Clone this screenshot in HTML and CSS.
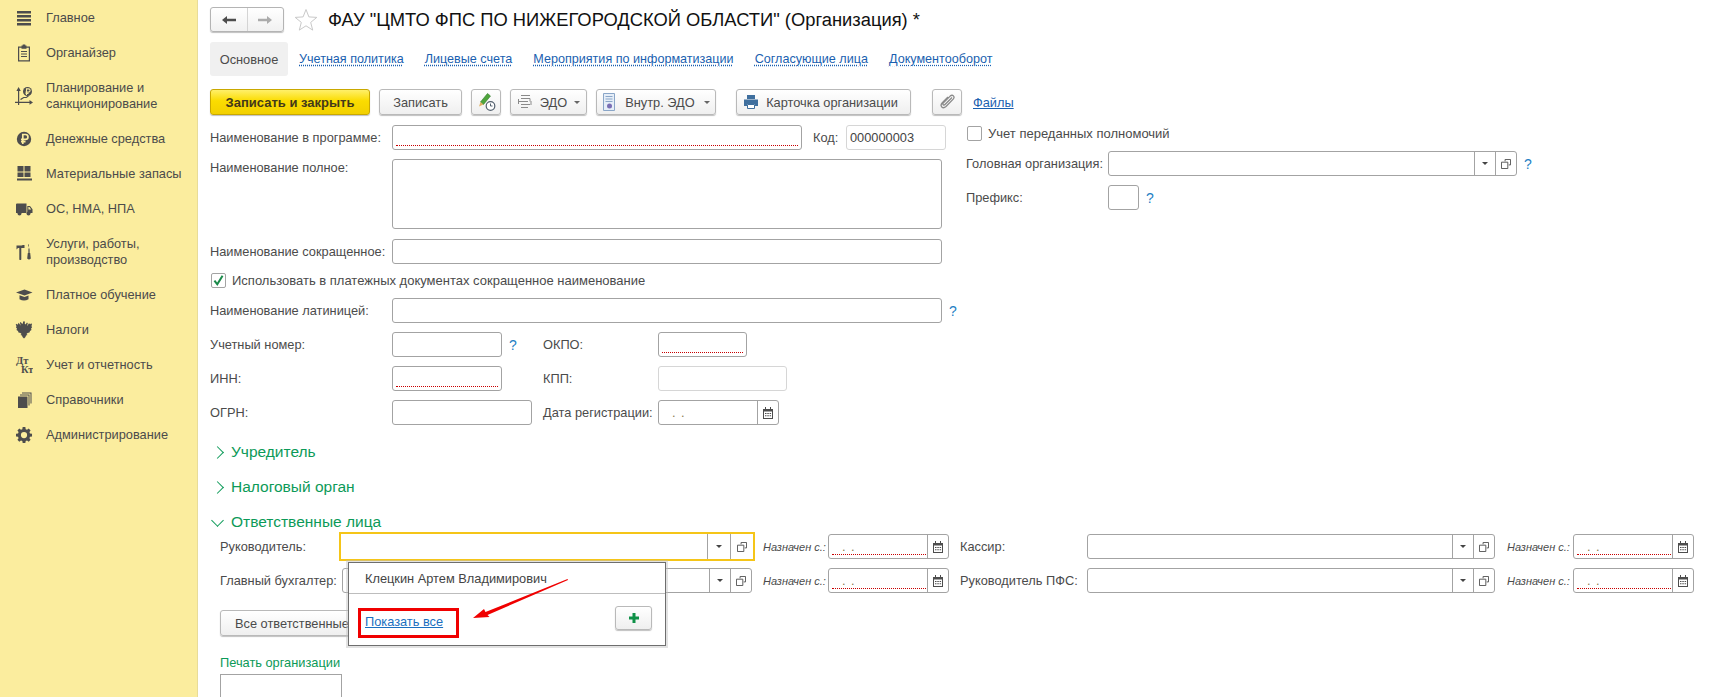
FILE: index.html
```html
<!DOCTYPE html>
<html lang="ru">
  <head>
    <meta charset="UTF-8" />
    <title>ФАУ "ЦМТО ФПС ПО НИЖЕГОРОДСКОЙ ОБЛАСТИ" (Организация)</title>
    <link rel="stylesheet" href="styles.css">
  </head>
  <body>
    <div class="app">
      <nav class="sidebar">
        <a class="nav-item">
          <svg class="nav-icon" viewBox="0 0 18 18"><path d="M2 2h14v2.4H2zM2 6h14v2.4H2zM2 10h14v2.4H2zM2 14h14v2.4H2z"/></svg>
          <span>Главное</span>
        </a>
        <a class="nav-item">
          <svg class="nav-icon" viewBox="0 0 18 18"><path d="M6.5 1.5h1.2V.6h2.6v.9h1.2v1H15v15H3v-15h3.5zM4.2 3.7v12.6h9.6V3.7h-2.3v1h-5v-1zM6 7h6v1.1H6zM6 9.5h6v1.1H6zM6 12h6v1.1H6z"/></svg>
          <span>Органайзер</span>
        </a>
        <a class="nav-item nav-item-double">
          <svg class="nav-icon" viewBox="0 0 18 18"><path d="M3 18v-2H0v-1.200h3V4H1.400L3.600 0l2.200 4H4.200v10.800h10.300V13l3.500 2.400-3.500 2.400v-1.800H4.200v2zM5.500 13v-1.300l3-1.800h2.500l2-1.500.8 1-2.400 1.700H9l-3 1.900z"/><circle cx="12.500" cy="4.500" r="4.500"/><path class="cut" d="M11.500 8V1.900h2a1.500 1.500 0 0 1 0 3.200h-3M10.500 6.500h3" fill="none"/></svg>
          <span>Планирование и санкционирование</span>
        </a>
        <a class="nav-item">
          <svg class="nav-icon" viewBox="0 0 18 18"><circle cx="9" cy="9" r="7.200"/><path class="cut thick" d="M7.800 14V4.500h2.700a2.400 2.400 0 0 1 0 4.900H6M6 11.700h4.500" fill="none"/></svg>
          <span>Денежные средства</span>
        </a>
        <a class="nav-item">
          <svg class="nav-icon" viewBox="0 0 18 18"><path d="M2.500 1h6v5.500h-6zM9.500 1h6v5.500h-6zM2.500 7.500h6V12h-6zM9.500 7.500h6V12h-6zM2 13.500h15v2H2z"/></svg>
          <span>Материальные запасы</span>
        </a>
        <a class="nav-item">
          <svg class="nav-icon" viewBox="0 0 18 18"><path d="M1 4.500q0-1 1-1h9.500v9.500H1zM12.300 6h2.700l2.500 3.300V13h-5.200zM13.400 7.100v2.400h2.800l-1.800-2.400z"/><circle cx="4.500" cy="13.500" r="2"/><circle cx="13.500" cy="13.500" r="2"/></svg>
          <span>ОС, НМА, НПА</span>
        </a>
        <a class="nav-item nav-item-double">
          <svg class="nav-icon" viewBox="0 0 18 18"><path d="M1.500 2.500h5l1.500-.5h1.500v3h-3.200v11.500q-1 1-2 0V5H3L1.500 6.500zM13 1.500h1v3l.6 2V10h.6l.6 5.500q-1.800 2-3.600 0l.6-5.500h.6V6.500l.6-2z"/></svg>
          <span>Услуги, работы, производство</span>
        </a>
        <a class="nav-item">
          <svg class="nav-icon" viewBox="0 0 18 18"><path d="M1 6.500 9.500 3.500l8 3-8 3zM4.500 9.300l5 1.800 4-1.500v3.600q-4.500 2.700-9 0z"/></svg>
          <span>Платное обучение</span>
        </a>
        <a class="nav-item">
          <svg class="nav-icon" viewBox="0 0 18 18"><path d="M8 .5h2l-.3 2 .8 1 1.500-2 .8.800-.8 3 2-3 1.200 1 1-1 .8 1L16.500 5l.5 1.500-1 1 .5 1.500-1.500 1-.5 1.500-2 .5-1 1 1 1-1.500.5-.5 1.500L9 17.500 7.500 16 7 14.500l-1.500-.5 1-1-1-1-2-.5L3 10 1.500 9 2 7.500l-1-1 .5-1.500-.8-1.200.8-1 1 1L3.700 1.800l2 3-.8-3 .8-.8 1.500 2 .8-1z"/></svg>
          <span>Налоги</span>
        </a>
        <a class="nav-item">
          <svg class="nav-icon" viewBox="0 0 18 18"><text class="dk" x="1" y="8">Дт</text><text class="dk" x="6" y="17">Кт</text></svg>
          <span>Учет и отчетность</span>
        </a>
        <a class="nav-item">
          <svg class="nav-icon" viewBox="0 0 18 18"><path d="M3 5.500h9.500V17H3zM5 3.500h9.500v11h-1V4.500H5zM7 1.500h9.500v11h-1v-10H7z"/></svg>
          <span>Справочники</span>
        </a>
        <a class="nav-item">
          <svg class="nav-icon" viewBox="0 0 18 18"><path fill-rule="evenodd" d="M7.500 1h3l.4 2.300 1.500.6 1.900-1.300 2.100 2.100-1.300 1.900.6 1.500 2.300.4v3l-2.300.4-.6 1.500 1.300 1.900-2.100 2.100-1.900-1.300-1.500.6-.4 2.300h-3l-.4-2.300-1.500-.6-1.900 1.300L1.600 15.300l1.300-1.900-.6-1.500L0 11.500v-3l2.300-.4.6-1.500L1.600 4.700l2.100-2.100 1.900 1.300 1.500-.6zM9 6.500a3.500 3.500 0 1 0 0 7 3.500 3.500 0 0 0 0-7z" transform="translate(1 .2) scale(.89)"/></svg>
          <span>Администрирование</span>
        </a>
      </nav>

      <main class="main">
        <header class="title-bar">
          <div class="history">
            <span class="history-btn">
              <svg width="14" height="10" viewBox="0 0 14 10"><path fill="#4d4d4d" d="M0 5 5 1v2.800h9v2.400H5V9z"/></svg>
            </span>
            <span class="history-btn">
              <svg width="14" height="10" viewBox="0 0 14 10"><path fill="#ababab" d="M14 5 9 1v2.800H0v2.400h9V9z"/></svg>
            </span>
          </div>
          <svg class="star" width="24" height="24" viewBox="0 0 24 24"><path fill="#fff" stroke="#c9c9c9" d="M12 1.500l2.900 7.400 7.900.5-6.100 5 2 7.700-6.700-4.300-6.700 4.300 2-7.700-6.100-5 7.900-.5z"/></svg>
          <h1 class="title">ФАУ "ЦМТО ФПС ПО НИЖЕГОРОДСКОЙ ОБЛАСТИ" (Организация) *</h1>
        </header>

        <div class="tabs">
          <span class="tab tab-active">Основное</span>
          <a class="tab tab-link">Учетная политика</a>
          <a class="tab tab-link">Лицевые счета</a>
          <a class="tab tab-link">Мероприятия по информатизации</a>
          <a class="tab tab-link">Согласующие лица</a>
          <a class="tab tab-link">Документооборот</a>
        </div>

        <div class="toolbar">
          <button class="btn btn-primary">Записать и закрыть</button>
          <button class="btn btn-save">Записать</button>
          <button class="btn btn-sign">
            <svg width="20" height="20" viewBox="0 0 20 20"><path fill="#4fa53c" stroke="#2f7a2a" stroke-width=".6" d="M11.500 1.500l3 2.500-7 8.500-3-2.500z"/><path fill="#e0b060" d="M4.500 10l3 2.500-4.500 2z"/><circle cx="14.500" cy="14" r="4.300" fill="#fff" stroke="#53606e" stroke-width="1.200"/><path fill="none" stroke="#53606e" d="M14.500 11.500V14h2"/></svg>
          </button>
          <button class="btn btn-edo">
            <svg width="16" height="16" viewBox="0 0 16 16"><path fill="none" stroke="#8a8a8a" d="M4 1.500h9M4 4.500h9v3M2 7.500h9M4 10.500h9M4 13.500h7M1.500 5v5M14 7v4"/></svg>
            <span>ЭДО</span><i class="caret"></i>
          </button>
          <button class="btn btn-inner">
            <svg width="14" height="18" viewBox="0 0 14 18"><path fill="#e6eef8" stroke="#8aa6c8" d="M1.500.5h11v17h-11z"/><path stroke="#8aa6c8" d="M3.500 3.500h7M3.500 6h7M3.500 8.500h7"/><circle cx="7.500" cy="13" r="2.500" fill="#7a6fb5"/></svg>
            <span>Внутр. ЭДО</span><i class="caret"></i>
          </button>
          <button class="btn btn-card">
            <svg width="16" height="16" viewBox="0 0 16 16"><path fill="#3f6f9e" d="M4 1h8v4H4zM1 5.500h14V12h-3v-2H4v2H1z"/><path fill="#fff" stroke="#3f6f9e" d="M4.500 10.500h7v4h-7z"/></svg>
            <span>Карточка организации</span>
          </button>
          <button class="btn btn-clip">
            <svg width="16" height="16" viewBox="0 0 16 16"><path fill="none" stroke="#8a8a8a" stroke-width="1.300" d="M13 3.500 6 10.500q-1 1-1.800.2t.2-1.800l6.800-6.800q1.800-1.600 3.200-.2t-.2 3.200L7 12.500q-2.500 2.200-4.200.5T3.300 8.800L9 3"/></svg>
          </button>
          <a class="files-link">Файлы</a>
        </div>

        <div class="form-top">
          <div class="form-left">
            <div class="row">
              <label class="lbl">Наименование в программе:</label>
              <div class="field field-required f-name"></div>
              <label class="code-lbl">Код:</label>
              <div class="field field-muted f-code">000000003</div>
            </div>
            <div class="row row-area">
              <label class="lbl">Наименование полное:</label>
              <div class="field f-wide f-area"></div>
            </div>
            <div class="row row-short">
              <label class="lbl">Наименование сокращенное:</label>
              <div class="field f-wide"></div>
            </div>
            <div class="row-check">
              <span class="checkbox">
                <svg width="16" height="16" viewBox="0 0 16 16"><path fill="none" stroke="#1b8a4a" stroke-width="2.500" d="M3 7.500l3.500 4.500L13 1.500"/></svg>
              </span>
              <span>Использовать в платежных документах сокращенное наименование</span>
            </div>
            <div class="row">
              <label class="lbl">Наименование латиницей:</label>
              <div class="field f-wide"></div>
              <a class="help">?</a>
            </div>
            <div class="row">
              <label class="lbl">Учетный номер:</label>
              <div class="col-2">
                <div class="field f-110"></div>
                <a class="help">?</a>
              </div>
              <label class="lbl-2">ОКПО:</label>
              <div class="field field-required f-okpo"></div>
            </div>
            <div class="row">
              <label class="lbl">ИНН:</label>
              <div class="col-2">
                <div class="field field-required f-110"></div>
              </div>
              <label class="lbl-2">КПП:</label>
              <div class="field field-muted f-kpp"></div>
            </div>
            <div class="row">
              <label class="lbl">ОГРН:</label>
              <div class="col-2">
                <div class="field f-140"></div>
              </div>
              <label class="lbl-2">Дата регистрации:</label>
              <div class="field f-reg">
                <span class="date-mask">. .</span>
                <span class="field-btn">
                  <svg class="cal" viewBox="0 0 10 12"><path fill="#4d4d4d" d="M0 2h2V0h1v2h4V0h1v2h2v10H0zM1 4.500V11h8V4.500zM2 6h1.500v1H2zM4.300 6h1.500v1H4.300zM6.600 6h1.500v1H6.600zM2 8.300h1.500v1H2zM4.300 8.300h1.500v1H4.300zM6.600 8.300h1.500v1H6.600z"/></svg>
                </span>
              </div>
            </div>
          </div>

          <div class="form-right">
            <div class="row-check row-check-right">
              <span class="checkbox"></span>
              <span>Учет переданных полномочий</span>
            </div>
            <div class="row">
              <label class="lbl-right">Головная организация:</label>
              <div class="field f-head">
                <span class="field-btn"><i class="caret caret-dark"></i></span>
                <span class="field-btn">
                  <svg class="open" viewBox="0 0 11 11"><path fill="none" stroke="#4d4d4d" d="M4.500 2.500V.5h6v6h-2M.5 3.500h7v7h-7z"/></svg>
                </span>
              </div>
              <a class="help">?</a>
            </div>
            <div class="row">
              <label class="lbl-right">Префикс:</label>
              <div class="field f-prefix"></div>
              <a class="help">?</a>
            </div>
          </div>
        </div>

        <div class="group group-first"><i class="chev"></i><span>Учредитель</span></div>
        <div class="group"><i class="chev"></i><span>Налоговый орган</span></div>
        <div class="group"><i class="chev chev-open"></i><span>Ответственные лица</span></div>

        <section class="people">
          <div class="people-grid">
            <label>Руководитель:</label>
            <div class="field field-focus">
              <span class="field-btn"><i class="caret caret-dark"></i></span>
              <span class="field-btn">
                <svg class="open" viewBox="0 0 11 11"><path fill="none" stroke="#4d4d4d" d="M4.500 2.500V.5h6v6h-2M.5 3.500h7v7h-7z"/></svg>
              </span>
            </div>
            <label class="since">Назначен с.:</label>
            <div class="field field-required field-date">
              <span class="date-mask">. .</span>
              <span class="field-btn">
                <svg class="cal" viewBox="0 0 10 12"><path fill="#4d4d4d" d="M0 2h2V0h1v2h4V0h1v2h2v10H0zM1 4.500V11h8V4.500zM2 6h1.500v1H2zM4.300 6h1.500v1H4.300zM6.600 6h1.500v1H6.600zM2 8.300h1.500v1H2zM4.300 8.300h1.500v1H4.300zM6.600 8.300h1.500v1H6.600z"/></svg>
              </span>
            </div>
            <label class="pad-lbl">Кассир:</label>
            <div class="field">
              <span class="field-btn"><i class="caret caret-dark"></i></span>
              <span class="field-btn">
                <svg class="open" viewBox="0 0 11 11"><path fill="none" stroke="#4d4d4d" d="M4.500 2.500V.5h6v6h-2M.5 3.500h7v7h-7z"/></svg>
              </span>
            </div>
            <label class="since since-right">Назначен с.:</label>
            <div class="field field-required field-date">
              <span class="date-mask">. .</span>
              <span class="field-btn">
                <svg class="cal" viewBox="0 0 10 12"><path fill="#4d4d4d" d="M0 2h2V0h1v2h4V0h1v2h2v10H0zM1 4.500V11h8V4.500zM2 6h1.500v1H2zM4.300 6h1.500v1H4.300zM6.600 6h1.500v1H6.600zM2 8.300h1.500v1H2zM4.300 8.300h1.500v1H4.300zM6.600 8.300h1.500v1H6.600z"/></svg>
              </span>
            </div>

            <label>Главный бухгалтер:</label>
            <div class="field field-inset">
              <span class="field-btn"><i class="caret caret-dark"></i></span>
              <span class="field-btn">
                <svg class="open" viewBox="0 0 11 11"><path fill="none" stroke="#4d4d4d" d="M4.500 2.500V.5h6v6h-2M.5 3.500h7v7h-7z"/></svg>
              </span>
            </div>
            <label class="since">Назначен с.:</label>
            <div class="field field-required field-date">
              <span class="date-mask">. .</span>
              <span class="field-btn">
                <svg class="cal" viewBox="0 0 10 12"><path fill="#4d4d4d" d="M0 2h2V0h1v2h4V0h1v2h2v10H0zM1 4.500V11h8V4.500zM2 6h1.500v1H2zM4.300 6h1.500v1H4.300zM6.600 6h1.500v1H6.600zM2 8.300h1.500v1H2zM4.300 8.300h1.500v1H4.300zM6.600 8.300h1.500v1H6.600z"/></svg>
              </span>
            </div>
            <label class="pad-lbl">Руководитель ПФС:</label>
            <div class="field">
              <span class="field-btn"><i class="caret caret-dark"></i></span>
              <span class="field-btn">
                <svg class="open" viewBox="0 0 11 11"><path fill="none" stroke="#4d4d4d" d="M4.500 2.500V.5h6v6h-2M.5 3.500h7v7h-7z"/></svg>
              </span>
            </div>
            <label class="since since-right">Назначен с.:</label>
            <div class="field field-required field-date">
              <span class="date-mask">. .</span>
              <span class="field-btn">
                <svg class="cal" viewBox="0 0 10 12"><path fill="#4d4d4d" d="M0 2h2V0h1v2h4V0h1v2h2v10H0zM1 4.500V11h8V4.500zM2 6h1.500v1H2zM4.300 6h1.500v1H4.300zM6.600 6h1.500v1H6.600zM2 8.300h1.500v1H2zM4.300 8.300h1.500v1H4.300zM6.600 8.300h1.500v1H6.600z"/></svg>
              </span>
            </div>
          </div>

          <button class="btn btn-all">Все ответственные</button>
          <div class="stamp-title">Печать организации</div>
          <div class="stamp-box"></div>

          <div class="popup">
            <div class="popup-item">Клецкин Артем Владимирович</div>
            <div class="popup-foot">
              <a class="popup-link">Показать все</a>
              <button class="btn btn-plus">
                <svg width="12" height="12" viewBox="0 0 12 12"><path fill="#0f9148" d="M4.500 1h3v3.500H11v3H7.500V11h-3V7.500H1v-3h3.500z"/></svg>
              </button>
            </div>
            <div class="red-frame"></div>
            <svg class="arrow" viewBox="0 0 323 89"><path fill="#f00000" d="M127 58l11-9 1.500 3 82-33 .5 1-80.500 35 2 2z"/></svg>
          </div>
        </section>
      </main>
    </div>
  </body>
</html>
```

FILE: styles.css
```css
* {
  box-sizing: border-box;
}
html,
body {
  margin: 0;
  height: 100%;
  overflow: hidden;
}
body {
  font-family: "Liberation Sans", Arial, sans-serif;
  font-size: 12.8px;
  color: #4b4b4b;
  background-color: white;
}
.app {
  display: flex;
  height: 697px;
}

/* left section panel */
.sidebar {
  width: 198px;
  flex-shrink: 0;
  padding-top: 1px;
  background-color: #fbed9e;
  border-right: 1px solid #e8dc98;
}
.nav-item {
  display: flex;
  align-items: center;
  height: 34.800px;
  padding-left: 15px;
  line-height: 16px;
}
.nav-item-double {
  height: 51.500px;
}
.nav-item span {
  margin-left: 13px;
  width: 145px;
}
.nav-icon {
  width: 18px;
  height: 18px;
  flex-shrink: 0;
  fill: #4d4d4d;
}
.nav-icon .cut {
  stroke: #fbed9e;
  stroke-width: 1.1;
}
.nav-icon .thick {
  stroke-width: 1.7;
}
.nav-icon .dk {
  font-family: "Liberation Serif", serif;
  font-size: 10.500px;
  font-weight: bold;
}

.main {
  flex: 1;
  min-width: 0;
  height: 697px;
  overflow: hidden;
  padding: 7px 0 0 12px;
}

/* title */
.title-bar {
  display: flex;
  align-items: center;
  height: 25px;
  margin-bottom: 10px;
}
.history {
  display: flex;
  width: 74px;
  height: 25px;
  border: 1px solid #b4b4b4;
  border-radius: 3px;
  background: linear-gradient(#ffffff, #f1f1f1);
  box-shadow: 0 1px 1px rgba(0, 0, 0, 0.25);
}
.history-btn {
  flex: 1;
  display: flex;
  align-items: center;
  justify-content: center;
}
.history-btn + .history-btn {
  border-left: 1px solid #d4d4d4;
}
.star {
  margin-left: 10px;
}
.title {
  margin: 0 0 0 10px;
  font-size: 18.350px;
  font-weight: normal;
  color: #111;
  white-space: nowrap;
}

/* tabs */
.tabs {
  display: flex;
  height: 34px;
  margin-bottom: 13px;
}
.tab {
  display: flex;
  align-items: center;
}
.tab-active {
  width: 78px;
  justify-content: center;
  background-color: #f0f0f0;
  border-radius: 3px;
  margin-right: 11px;
}
.tab-link {
  margin-right: 21px;
  font-size: 12.600px;
  color: #1a5fb0;
  text-decoration: underline dotted;
  text-underline-offset: 2px;
}

/* toolbar */
.toolbar {
  display: flex;
  align-items: center;
  gap: 9px;
  height: 26px;
  margin-bottom: 10px;
}
.btn {
  display: flex;
  align-items: center;
  justify-content: center;
  height: 26px;
  padding: 0;
  font-family: inherit;
  font-size: 12.800px;
  color: #4b4b4b;
  border: 1px solid #b9b9b9;
  border-radius: 3px;
  background: linear-gradient(#ffffff, #efefef);
  box-shadow: 0 1px 1px rgba(0, 0, 0, 0.25);
}
.btn-primary {
  width: 160px;
  font-size: 13px;
  font-weight: bold;
  color: #43391a;
  border-color: #c9a800;
  background: linear-gradient(#fff06a, #fbdc00 45%, #f2d000);
}
.btn-save {
  width: 83px;
}
.btn-sign {
  width: 30px;
}
.btn-edo {
  width: 77px;
  gap: 7px;
}
.btn-inner {
  width: 120px;
  gap: 9px;
}
.btn-card {
  width: 175px;
  gap: 7px;
  margin-left: 11px;
  padding-right: 6px;
}
.btn-clip {
  width: 30px;
  margin-left: 12px;
}
.files-link {
  margin-left: 2px;
  color: #1a5fb0;
  text-decoration: underline;
}
.caret {
  display: inline-block;
  width: 0;
  height: 0;
  border-left: 3px solid transparent;
  border-right: 3px solid transparent;
  border-top: 3px solid #666;
}
.caret-dark {
  border-top-color: #444;
}

/* fields */
.field {
  position: relative;
  display: flex;
  align-items: center;
  justify-content: flex-end;
  height: 25px;
  background-color: white;
  border: 1px solid #a3a3a3;
  border-radius: 3px;
}
.field-muted {
  border-color: #d6d6d6;
}
.field-required::after {
  content: "";
  position: absolute;
  left: 3px;
  right: 3px;
  bottom: 3px;
  border-bottom: 1px dotted #c80000;
}
.field-date.field-required::after {
  right: 22px;
}
.field-btn {
  display: flex;
  align-items: center;
  justify-content: center;
  width: 21px;
  height: 100%;
  border-left: 1px solid #a3a3a3;
  flex-shrink: 0;
}
.date-mask {
  margin-right: auto;
  margin-left: 13px;
  word-spacing: 2px;
  color: #8a7a50;
}
.cal {
  width: 10px;
  height: 12px;
}
.open {
  width: 10px;
  height: 10px;
}
.help {
  margin-left: 7px;
  font-size: 14px;
  color: #1f7fc4;
}
.checkbox {
  display: flex;
  align-items: center;
  justify-content: center;
  width: 15px;
  height: 15px;
  flex-shrink: 0;
  border: 1px solid #a3a3a3;
  border-radius: 2px;
  background-color: white;
}

/* top of the form */
.form-top {
  display: flex;
}
.form-left {
  width: 756px;
  flex-shrink: 0;
}
.row {
  display: flex;
  align-items: center;
  height: 25px;
  margin-bottom: 9px;
}
.lbl {
  width: 182px;
  flex-shrink: 0;
}
.row-area {
  align-items: flex-start;
  height: 70px;
  margin-bottom: 10px;
}
.row-area .lbl {
  padding-top: 1px;
}
.row-short {
  margin-bottom: 9px;
}
.row-check {
  display: flex;
  align-items: center;
  gap: 6px;
  height: 15px;
  margin-bottom: 10px;
  padding-left: 1px;
  font-size: 13px;
}
.f-name {
  width: 410px;
}
.code-lbl {
  width: 33px;
  margin-left: 11px;
}
.f-code {
  width: 100px;
  justify-content: flex-start;
  padding-left: 3px;
  color: #444;
}
.f-wide {
  width: 550px;
}
.f-area {
  height: 70px;
}
.col-2 {
  display: flex;
  align-items: center;
  width: 151px;
  flex-shrink: 0;
}
.lbl-2 {
  width: 115px;
  flex-shrink: 0;
}
.f-110 {
  width: 110px;
}
.f-140 {
  width: 140px;
}
.f-okpo {
  width: 89px;
}
.f-kpp {
  width: 129px;
}
.f-reg {
  width: 121px;
}

.form-right {
  flex: 1;
  padding-top: 1px;
}
.row-check-right {
  margin-bottom: 10px;
}
.lbl-right {
  width: 142px;
  flex-shrink: 0;
}
.f-head {
  width: 409px;
}
.f-prefix {
  width: 31px;
}

/* collapsible groups */
.group {
  display: flex;
  align-items: center;
  height: 20px;
  margin-top: 15px;
  padding-left: 3px;
  font-size: 15.500px;
  color: #0c9a58;
}
.group-first {
  margin-top: 8px;
}
.group span {
  margin-left: 9px;
}
.chev {
  display: block;
  width: 9px;
  height: 9px;
  border-top: 1.500px solid #0c9a58;
  border-right: 1.500px solid #0c9a58;
  transform: rotate(45deg);
}
.chev-open {
  transform: translateY(-2px) rotate(135deg);
}

/* responsible persons */
.people {
  position: relative;
  padding-left: 10px;
}
.people-grid {
  display: grid;
  grid-template-columns: 119px 416px 73px 121px 137.500px 408.500px 78px 120.500px;
  grid-template-rows: 29px 25px;
  row-gap: 7px;
  align-items: center;
}
.field-focus {
  height: 29px;
  border: 2px solid #f5c518;
  border-radius: 0;
}
.field-focus .field-btn {
  width: 23px;
}
.field-inset {
  margin: 0 3px;
}
.since {
  padding-left: 8px;
  font-size: 11px;
  font-style: italic;
  white-space: nowrap;
}
.since-right {
  padding-left: 12px;
}
.pad-lbl {
  padding-left: 11px;
}
.btn-all {
  width: 170px;
  margin-top: 17px;
  justify-content: flex-start;
  padding-left: 14px;
}
.stamp-title {
  height: 16px;
  margin-top: 19px;
  color: #0c9a58;
}
.stamp-box {
  width: 122px;
  height: 23px;
  margin-top: 3px;
  border: 1px solid #a3a3a3;
  border-bottom: none;
}

/* dropdown over the fields */
.popup {
  position: absolute;
  left: 138px;
  top: 30px;
  width: 318px;
  height: 84px;
  background-color: white;
  border: 1px solid #6e6e6e;
  outline: 2px solid rgba(190, 190, 190, 0.45);
}
.popup-item {
  display: flex;
  align-items: center;
  height: 31px;
  padding-left: 16px;
  color: #444;
  border-bottom: 1px solid #bdbdbd;
}
.popup-foot {
  display: flex;
  align-items: flex-start;
  justify-content: space-between;
  padding: 12px 13px 0 16px;
}
.popup-link {
  margin-top: 8px;
  color: #1a6fc0;
  text-decoration: underline;
}
.btn-plus {
  width: 37px;
  height: 24px;
}
.red-frame {
  position: absolute;
  left: 9px;
  top: 45px;
  width: 101px;
  height: 30px;
  border: 3px solid #f00000;
}
.arrow {
  position: absolute;
  left: -3px;
  top: -3px;
  width: 323px;
  height: 89px;
}
```
